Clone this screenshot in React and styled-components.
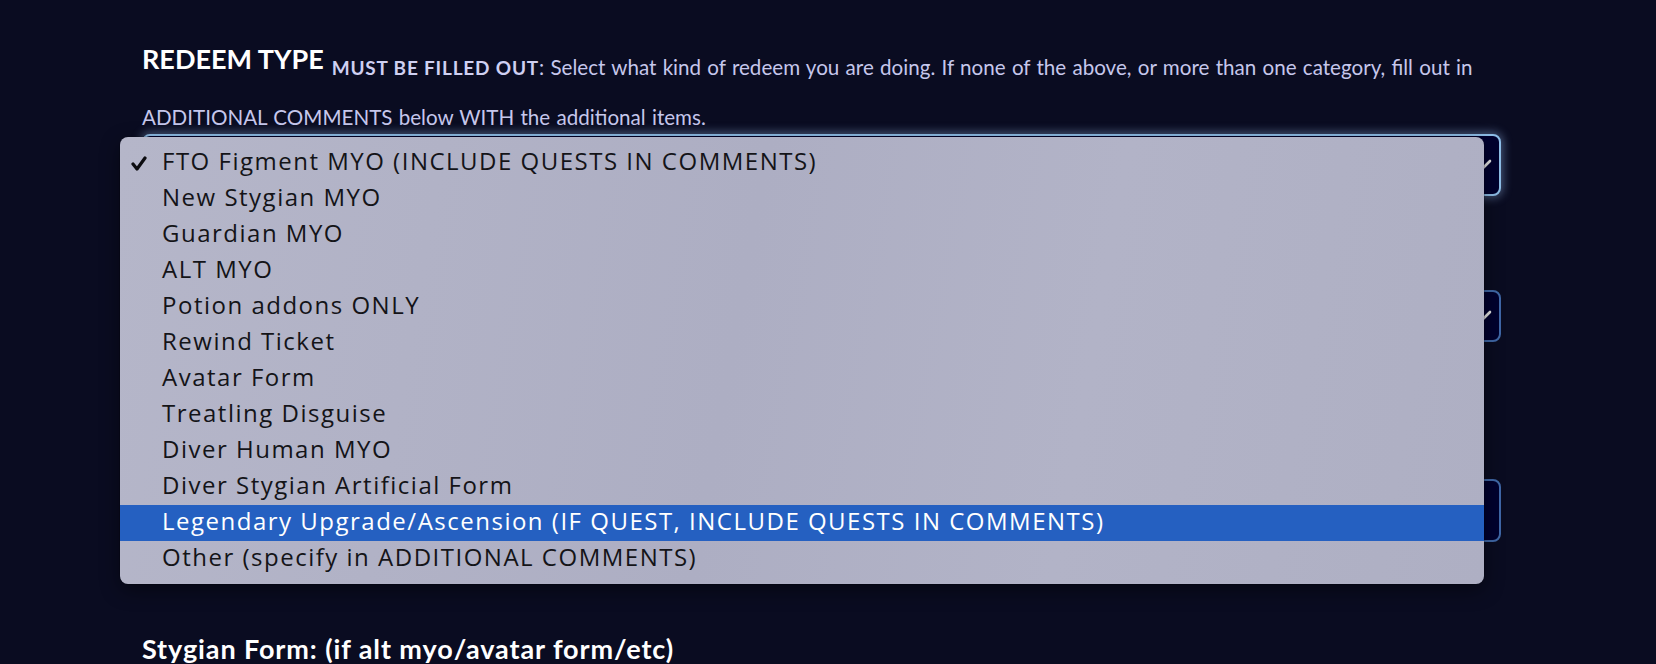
import React from "react";
import styled, { createGlobalStyle } from "styled-components";

const GlobalStyle = createGlobalStyle`
  html, body {
    margin: 0;
    padding: 0;
    background: #0a0c21;
  }
  body {
    font-family: Lato, "Open Sans", sans-serif;
    overflow: hidden;
  }
`;

const Page = styled.div`
  width: 1656px;
  height: 664px;
  box-sizing: border-box;
  padding: 45px 0 0 142px;
  background: #0a0c21;
`;

const Form = styled.form`
  width: 1359px;
  display: flex;
  flex-direction: column;
`;

const Label = styled.div`
  font-family: Lato, "Open Sans", sans-serif;
  font-size: 20.6px;
  line-height: 30px;
  word-spacing: 1px;
  color: #c6c7ec;
  white-space: nowrap;
`;

const Heading = styled.span`
  display: inline-block;
  font-size: 27px;
  line-height: 1;
  font-weight: 700;
  word-spacing: 0;
  color: #ffffff;
  vertical-align: 6px;
  margin-bottom: 30px;
  margin-right: 8px;
`;

const Strong = styled.strong`
  font-size: 19px;
  letter-spacing: 0.8px;
  word-spacing: 0;
  font-weight: 700;
  color: #cfd0f2;
`;

const Field = styled.div`
  position: relative;
  margin-top: ${(p) => p.$gap}px;
`;

const SelectBox = styled.div`
  box-sizing: border-box;
  height: ${(p) => p.$h}px;
  display: flex;
  align-items: center;
  justify-content: flex-end;
  padding: 0 7px 0 16px;
  border-radius: 8px;
  background: #00002e;
  border: 2px solid ${(p) => (p.$focused ? "#8fbfe9" : "#4068a8")};
  box-shadow: ${(p) =>
    p.$focused ? "0 0 10px 2px rgba(150, 185, 235, 0.45)" : "none"};
`;

const Chevron = styled.svg`
  width: 20px;
  height: 12px;
  flex: none;
`;

const SectionTitle = styled.h3`
  margin: ${(p) => p.$gap}px 0 0;
  font-size: 27px;
  letter-spacing: 0.9px;
  line-height: 1;
  font-weight: 700;
  color: #ffffff;
`;

const Menu = styled.ul`
  position: absolute;
  top: 3px;
  left: -22px;
  width: 1364px;
  margin: 0;
  padding: 8px 0 7px;
  list-style: none;
  box-sizing: border-box;
  border-radius: 8px;
  background: linear-gradient(100deg, #b5b6c9 0%, #adaec3 45%, #b2b3c7 70%, #aeafc3 100%);
  box-shadow: 0 6px 20px rgba(0, 0, 0, 0.45), 0 0 0 0.5px rgba(0, 0, 0, 0.3);
  z-index: 10;
`;

const Item = styled.li`
  position: relative;
  box-sizing: border-box;
  height: 36px;
  line-height: 32px;
  padding-left: 42px;
  font-family: "Open Sans", "Liberation Sans", Arial, sans-serif;
  font-size: 24px;
  letter-spacing: 1.5px;
  white-space: nowrap;
  color: ${(p) => (p.$active ? "#ffffff" : "#141418")};
  background: ${(p) => (p.$active ? "#2560c1" : "transparent")};
`;

const Check = styled.svg`
  position: absolute;
  left: 11px;
  top: 11px;
  width: 16px;
  height: 15px;
`;

const OPTIONS = [
  "FTO Figment MYO (INCLUDE QUESTS IN COMMENTS)",
  "New Stygian MYO",
  "Guardian MYO",
  "ALT MYO",
  "Potion addons ONLY",
  "Rewind Ticket",
  "Avatar Form",
  "Treatling Disguise",
  "Diver Human MYO",
  "Diver Stygian Artificial Form",
  "Legendary Upgrade/Ascension (IF QUEST, INCLUDE QUESTS IN COMMENTS)",
  "Other (specify in ADDITIONAL COMMENTS)",
];

const ChevronIcon = () => (
  <Chevron viewBox="0 0 20 12">
    <path d="M2 2 L10 10 L18 2" fill="none" stroke="#e6e6e6" strokeWidth="2.6" strokeLinecap="round" strokeLinejoin="round" />
  </Chevron>
);

export default function App() {
  return (
    <>
      <GlobalStyle />
      <Page>
        <Form>
          <Label>
            <Heading>REDEEM TYPE</Heading>
            <Strong>MUST BE FILLED OUT</Strong>: Select what kind of redeem you are doing. If none of the above, or more than one category, fill out in
            <br />
            ADDITIONAL COMMENTS below WITH the additional items.
          </Label>
          <Field $gap={2}>
            <SelectBox $focused $h={62}>
              <ChevronIcon />
            </SelectBox>
            <Menu>
              {OPTIONS.map((o, i) => (
                <Item key={o} $active={i === 10}>
                  {i === 0 && (
                    <Check viewBox="0 0 16 15">
                      <path d="M2 8 L6 13 L14 2" fill="none" stroke="#0c0c10" strokeWidth="3.2" strokeLinecap="round" strokeLinejoin="round" />
                    </Check>
                  )}
                  {o}
                </Item>
              ))}
            </Menu>
          </Field>
          <Field $gap={94}>
            <SelectBox $h={52}>
              <ChevronIcon />
            </SelectBox>
          </Field>
          <Field $gap={137}>
            <SelectBox $h={63} />
          </Field>
          <SectionTitle $gap={93}>Stygian Form: (if alt myo/avatar form/etc)</SectionTitle>
        </Form>
      </Page>
    </>
  );
}
